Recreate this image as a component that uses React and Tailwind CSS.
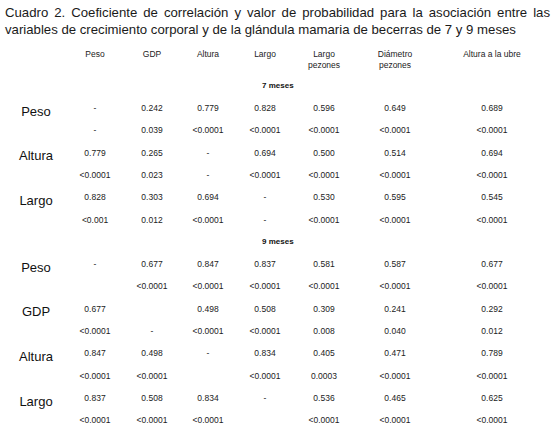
import React from "react";

const cols = ["Peso", "GDP", "Altura", "Largo", ["Largo", "pezones"], ["Diámetro", "pezones"], "Altura a la ubre"];

const sec7 = [
  ["Peso", ["-", "0.242", "0.779", "0.828", "0.596", "0.649", "0.689"], ["-", "0.039", "<0.0001", "<0.0001", "<0.0001", "<0.0001", "<0.0001"]],
  ["Altura", ["0.779", "0.265", "-", "0.694", "0.500", "0.514", "0.694"], ["<0.0001", "0.023", "-", "<0.0001", "<0.0001", "<0.0001", "<0.0001"]],
  ["Largo", ["0.828", "0.303", "0.694", "-", "0.530", "0.595", "0.545"], ["<0.001", "0.012", "<0.0001", "-", "<0.0001", "<0.0001", "<0.0001"]],
];

const sec9 = [
  ["Peso", ["-", "0.677", "0.847", "0.837", "0.581", "0.587", "0.677"], ["", "<0.0001", "<0.0001", "<0.0001", "<0.0001", "<0.0001", "<0.0001"]],
  ["GDP", ["0.677", "", "0.498", "0.508", "0.309", "0.241", "0.292"], ["<0.0001", "-", "<0.0001", "<0.0001", "0.008", "0.040", "0.012"]],
  ["Altura", ["0.847", "0.498", "-", "0.834", "0.405", "0.471", "0.789"], ["<0.0001", "<0.0001", "", "<0.0001", "0.0003", "<0.0001", "<0.0001"]],
  ["Largo", ["0.837", "0.508", "0.834", "-", "0.536", "0.465", "0.625"], ["<0.0001", "<0.0001", "<0.0001", "", "<0.0001", "<0.0001", "<0.0001"]],
];

const grid = "grid grid-cols-[72px_46px_68px_44px_70px_48px_94px_100px]";

function Group({ g }) {
  const [label, a, b] = g;
  return (
    <>
      <div className={grid + " h-[22.3px] items-center"}>
        <div className="text-center text-[13px] leading-none pt-[6px] text-[#111]">{label}</div>
        {a.map((v, i) => (
          <div key={i} className="text-center text-[8.5px] leading-none">{v}</div>
        ))}
      </div>
      <div className={grid + " h-[22.3px] items-center"}>
        <div />
        {b.map((v, i) => (
          <div key={i} className="text-center text-[8.5px] leading-none">{v}</div>
        ))}
      </div>
    </>
  );
}

function Section({ title }) {
  return (
    <div className="h-[22.3px] flex items-center pl-[262px] text-[8px] font-bold leading-none text-[#111]">{title}</div>
  );
}

export default function App() {
  return (
    <div className="w-[555px] h-[435px] bg-white overflow-hidden text-[#222]" style={{ fontFamily: '"Liberation Sans", Arial, sans-serif' }}>
      <div className="pl-[5px] pr-[5px] pt-[3.5px] text-[13.2px] leading-[17px] text-[#1a1a1a]">
        <div className="text-justify [text-align-last:justify]">
          Cuadro 2. Coeficiente de correlación y valor de probabilidad para la asociación entre las
        </div>
        <div>variables de crecimiento corporal y de la glándula mamaria de becerras de 7 y 9 meses</div>
      </div>
      <div className={grid + " mt-[11px] h-[26.35px] items-start text-[8.5px] leading-[11px]"}>
        <div />
        {cols.map((c, i) => (
          <div key={i} className="text-center">
            {Array.isArray(c) ? (
              <>
                <div>{c[0]}</div>
                <div>{c[1]}</div>
              </>
            ) : (
              c
            )}
          </div>
        ))}
      </div>
      <Section title="7 meses" />
      {sec7.map((g, i) => (
        <Group key={i} g={g} />
      ))}
      <Section title="9 meses" />
      {sec9.map((g, i) => (
        <Group key={i} g={g} />
      ))}
    </div>
  );
}
